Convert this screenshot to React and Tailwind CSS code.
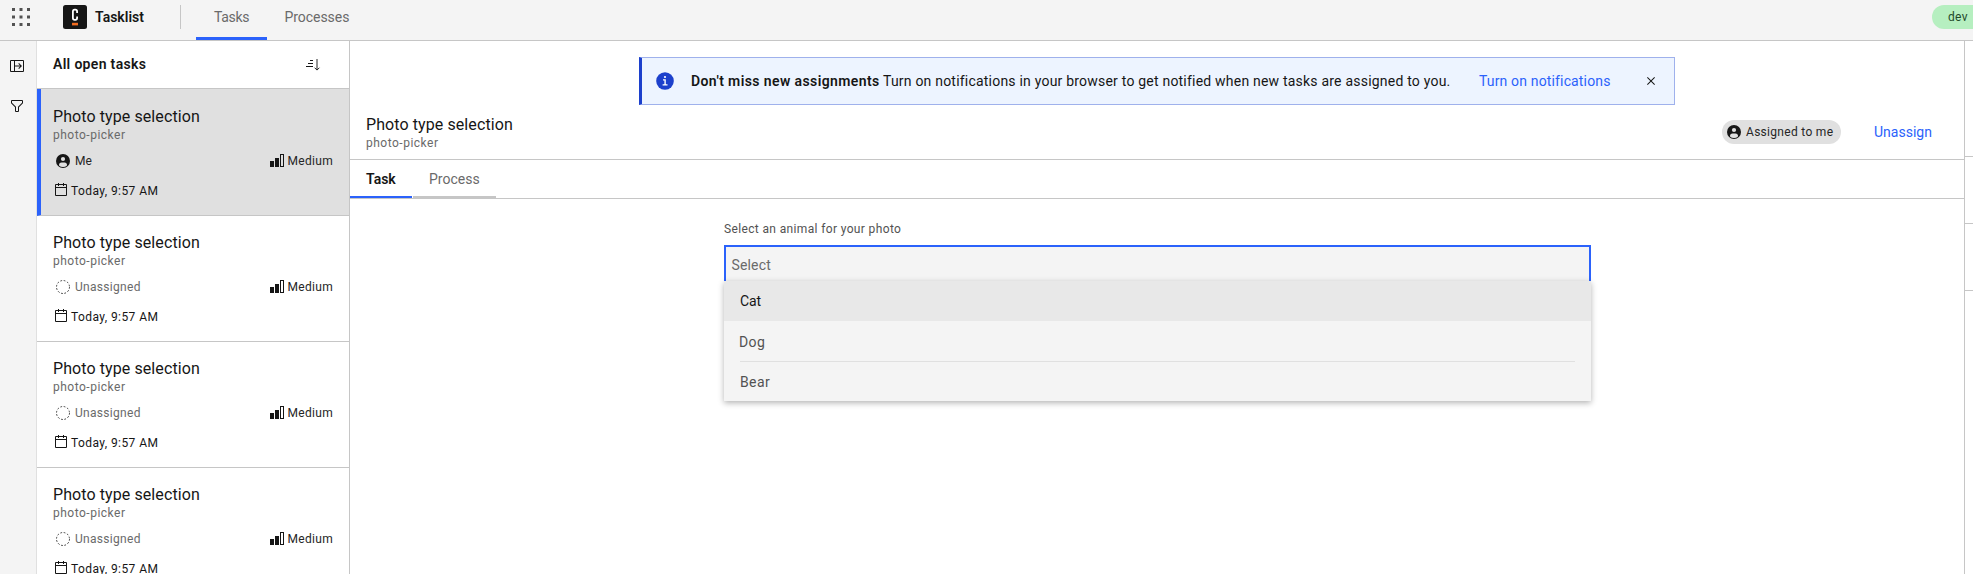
import React from 'react';

const Grid9 = () => (
  <svg className="size-5" viewBox="0 0 20 20" fill="#525252">
    {[1, 8.5, 16].map((y) => [1, 8.5, 16].map((x) => <rect key={`${x}-${y}`} x={x} y={y} width="3" height="3" />))}
  </svg>
);

const Logo = () => (
  <svg className="size-6" viewBox="0 0 24 24">
    <rect width="24" height="24" rx="2.5" fill="#161616" />
    <path d="M14.1 8V6.4A1.8 1.8 0 0 0 12.3 4.6h-.6A1.8 1.8 0 0 0 9.9 6.4v6.6a1.8 1.8 0 0 0 1.8 1.8h.6a1.8 1.8 0 0 0 1.8-1.8v-1.6" fill="none" stroke="#fff" strokeWidth="1.8" />
    <rect x="9" y="17.8" width="6" height="2.6" fill="#f36d21" />
  </svg>
);

const Icon = ({ d, className = 'size-4', fill = '#161616' }) => (
  <svg className={className} viewBox="0 0 32 32" fill={fill}>
    <path d={d} />
  </svg>
);

const PANEL = 'M28 4H4A2 2 0 0 0 2 6V26a2 2 0 0 0 2 2H28a2 2 0 0 0 2-2V6A2 2 0 0 0 28 4ZM4 6h6V26H4ZM28 26H12V17H22.15l-3.58 3.59L20 22l6-6-6-6-1.43 1.41L22.15 15H12V6H28Z';
const FILTER = 'M18,28H14a2,2,0,0,1-2-2V18.41L4.59,11A2,2,0,0,1,4,9.59V6A2,2,0,0,1,6,4H26a2,2,0,0,1,2,2V9.59A2,2,0,0,1,27.41,11L20,18.41V26A2,2,0,0,1,18,28ZM6,6V9.59l8,8V26h4V17.59l8-8V6Z';
const CALENDAR = 'M26,4H22V2H20V4H12V2H10V4H6A2,2,0,0,0,4,6V26a2,2,0,0,0,2,2H26a2,2,0,0,0,2-2V6A2,2,0,0,0,26,4ZM26,26H6V12H26Zm0-16H6V6h4V8h2V6h8V8h2V6h4Z';
const CLOSE = 'M17.4141 16L24 9.4141 22.5859 8 16 14.5859 9.4143 8 8 9.4141 14.5859 16 8 22.5859 9.4143 24 16 17.4141 22.5859 24 24 22.5859z';

const Sort = () => (
  <svg className="size-4" viewBox="0 0 16 16" fill="#161616">
    <path d="M5 3h3v1H5ZM3 6h5v1H3ZM1 9h7v1H1Z" />
    <path d="M12 2v11M9.6 10.7l2.4 2.4 2.4-2.4" fill="none" stroke="#262626" />
  </svg>
);

const User = () => (
  <svg className="size-4" viewBox="0 0 32 32">
    <circle cx="16" cy="16" r="14" fill="#161616" />
    <circle cx="16" cy="12" r="4.2" fill="#e0e0e0" />
    <path d="M8 24.8V24a5 5 0 0 1 5-5h6a5 5 0 0 1 5 5v.8A12 12 0 0 1 8 24.8Z" fill="#e0e0e0" />
  </svg>
);

const Dashed = () => (
  <svg className="size-4" viewBox="0 0 16 16" fill="none" stroke="#393939" strokeWidth="1" strokeDasharray="1.7 1.7">
    <circle cx="8" cy="8" r="6.5" />
  </svg>
);

const Signal = () => (
  <svg className="h-[14px] w-[14px]" viewBox="0 0 14 14">
    <path d="M0 7h4v6H0ZM5 4h4v9H5Z" fill="#161616" />
    <rect x="10.5" y="0.5" width="3" height="12" fill="none" stroke="#161616" />
  </svg>
);

const Info = () => (
  <svg className="size-5" viewBox="0 0 20 20">
    <circle cx="10" cy="10" r="8.8" fill="#1c40cc" />
    <path d="M8 8.3h2.8v5h1.7v1.3H7.6v-1.3h1.8V9.6H8Z" fill="#fff" />
    <circle cx="10" cy="6" r="1.1" fill="#fff" />
  </svg>
);

function TaskItem({ active }) {
  return (
    <li
      className={
        active
          ? 'h-[127px] border-b border-[#c6c6c6] border-l-4 border-l-[#2b62fb] bg-[#e0e0e0] pt-[18px] pl-3 pr-4'
          : 'h-[126px] border-b border-[#c6c6c6] pt-[17px] pl-4 pr-4'
      }
    >
      <div className="h-5 text-[16px] leading-5 tracking-[0.09px] text-[#161616]">Photo type selection</div>
      <div className="h-4 text-[12px] leading-4 tracking-[0.5px] text-[#6a6a6a]">photo-picker</div>
      <div className="mt-[10px] flex h-4 items-center justify-between">
        <span className="flex items-center gap-1 pl-[2px]">
          {active ? <User /> : <Dashed />}
          <span className={active ? 'text-[12px] leading-4 text-[#262626]' : 'text-[12px] leading-4 tracking-[0.3px] text-[#6a6a6a]'}>
            {active ? 'Me' : 'Unassigned'}
          </span>
        </span>
        <span className="flex items-center gap-1 text-[12px] leading-4 tracking-[0.3px] text-[#262626]">
          <Signal />
          Medium
        </span>
      </div>
      <div className="mt-[14px] flex h-4 items-start gap-[2px] text-[12px] leading-4 tracking-[0.42px] text-[#161616]">
        <Icon d={CALENDAR} className="-mt-px size-4" />
        Today, 9:57 AM
      </div>
    </li>
  );
}

function Header() {
  return (
    <header className="flex h-[41px] shrink-0 border-b border-[#c6c6c6] bg-[#f4f4f4] text-[14px] text-[#161616]">
      <div className="flex w-[63px] pt-[7px] pl-[11px]"><Grid9 /></div>
      <div className="flex h-[34px] items-center gap-2">
        <Logo />
        <span className="w-[85px] text-[14px] font-semibold">Tasklist</span>
      </div>
      <div className="mt-[5px] h-6 w-px bg-[#c6c6c6]" />
      <nav className="ml-[15px] flex text-[#6a6a6a]">
        <span className="h-10 w-[71px] border-b-3 border-[#2b62fb] pl-[18px] leading-[34px] tracking-[-0.3px]">Tasks</span>
        <span className="pl-[17.5px] leading-[34px] tracking-[-0.05px]">Processes</span>
      </nav>
      <div className="mt-[5px] ml-auto h-6 w-[41px] rounded-l-full bg-[#b6efc0] pl-4 text-[12px] leading-6 tracking-[0.3px] text-[#1f4a2a]">dev</div>
    </header>
  );
}

function Banner() {
  return (
    <div className="mt-4 ml-[289px] flex h-12 w-[1036px] items-center border border-l-3 border-[#9fb1ec] border-l-[#1c40cc] bg-[#edf4ff] pl-[13px] text-[14px] leading-5 text-[#161616]">
      <Info />
      <strong className="ml-4 w-[192px] font-semibold whitespace-nowrap tracking-[0.4px]">Don't miss new assignments</strong>
      <span className="w-[596px] whitespace-nowrap tracking-[0.21px]">Turn on notifications in your browser to get notified when new tasks are assigned to you.</span>
      <span className="w-[164px] whitespace-nowrap tracking-[0.15px] text-[#2b62fb]">Turn on notifications</span>
      <Icon d={CLOSE} />
    </div>
  );
}

function Select() {
  return (
    <div className="mt-[22px] ml-[374px] w-[867px]">
      <div className="h-6 text-[12px] leading-4 tracking-[0.36px] text-[#525252]">Select an animal for your photo</div>
      <div className="h-9 border-2 border-b-0 border-[#2b62fb] bg-[#f4f4f4] pl-[5.5px] text-[14px] leading-[36px] tracking-[0.16px] text-[#6a6a6a]">Select</div>
      <ul className="relative bg-[#f4f4f4] text-[14px] text-[#525252] shadow-[0_2px_6px_rgba(0,0,0,0.3)]">
        <li className="h-10 bg-[#e8e8e8] px-4 leading-10 tracking-[-0.1px] text-[#161616]">Cat</li>
        <li className="h-10 pr-4 pl-[15px] leading-[42px] tracking-[0.4px]">Dog</li>
        <li className="h-10 px-4 tracking-[0.4px]">
          <div className="h-10 border-t border-[#e0e0e0] leading-10">Bear</div>
        </li>
      </ul>
    </div>
  );
}

export default function App() {
  return (
    <div className="flex h-[574px] w-[1973px] flex-col overflow-hidden bg-white font-[Roboto,sans-serif]">
      <Header />
      <div className="flex h-[533px]">
        <aside className="flex w-[37px] shrink-0 flex-col items-start gap-6 border-r border-[#e0e0e0] bg-[#f4f4f4] pt-[17px] pl-[9px]">
          <Icon d={PANEL} />
          <Icon d={FILTER} />
        </aside>
        <section className="w-[313px] shrink-0 border-r border-[#c6c6c6]">
          <div className="flex h-12 items-start justify-between border-b border-[#c6c6c6] pr-7 pl-4">
            <h1 className="mt-[13px] text-[14px] leading-5 font-semibold tracking-[0.32px] text-[#161616]">All open tasks</h1>
            <div className="mt-4"><Sort /></div>
          </div>
          <ul>
            <TaskItem active />
            <TaskItem />
            <TaskItem />
            <TaskItem />
          </ul>
        </section>
        <main className="w-[1614px] shrink-0">
          <Banner />
          <div className="flex h-[55px] items-center border-b border-[#c6c6c6] pl-4">
            <div className="h-9 w-[1356px] pt-px">
              <div className="text-[16px] leading-5 tracking-[0.09px] text-[#161616]">Photo type selection</div>
              <div className="text-[12px] leading-4 tracking-[0.5px] text-[#6a6a6a]">photo-picker</div>
            </div>
            <div className="flex h-6 w-[119px] items-center gap-1 rounded-full bg-[#e0e0e0] pl-1 text-[12px] tracking-[0.3px] text-[#262626]">
              <User />
              Assigned to me
            </div>
            <span className="ml-[33px] text-[14px] leading-5 text-[#2b62fb]">Unassign</span>
          </div>
          <div className="flex h-[39px] border-b border-[#c6c6c6] text-[14px]">
            <span className="h-[38px] w-[62px] border-b-2 border-[#2b62fb] pl-4 leading-[39px] font-semibold text-[#161616]">Task</span>
            <span className="ml-px h-[38px] w-[83px] border-b-2 border-[#c6c6c6] pl-4 leading-[39px] text-[#6a6a6a]">Process</span>
          </div>
          <Select />
        </main>
        <aside className="grow border-l border-[#c6c6c6]">
          <div className="h-[116px] border-b border-[#c6c6c6]" />
          <div className="h-[67px] border-b border-[#c6c6c6]" />
          <div className="h-[67px] border-b border-[#c6c6c6]" />
        </aside>
      </div>
    </div>
  );
}
